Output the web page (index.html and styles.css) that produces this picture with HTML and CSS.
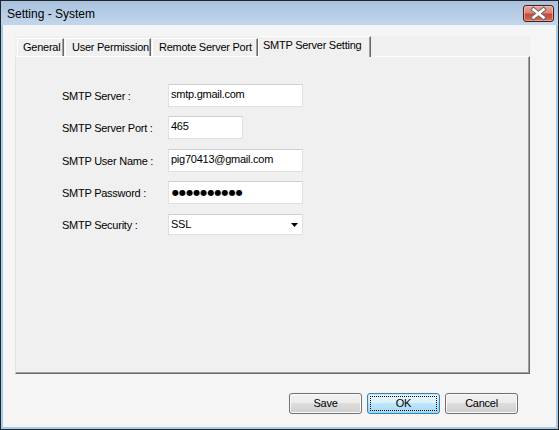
FILE: index.html
```html
<!DOCTYPE html>
<html>
<head>
<meta charset="utf-8">
<title>Setting - System</title>
<link rel="stylesheet" href="styles.css">
</head>
<body>
<div class="window">
  <div class="titlebar">
    <span class="title">Setting - System</span>
    <div class="close">
      <svg width="29" height="15" viewBox="0 0 29 15">
        <path d="M9.5 3.5 L19.5 11.5 M19.5 3.5 L9.5 11.5" stroke="#6b6b6b" stroke-width="4.6" stroke-linecap="square" fill="none"/>
        <path d="M9.5 3.5 L19.5 11.5 M19.5 3.5 L9.5 11.5" stroke="#ffffff" stroke-width="2.6" stroke-linecap="square" fill="none"/>
      </svg>
    </div>
  </div>
  <div class="client">
    <div class="tabcontrol">
      <div class="tabs">
        <div class="tab t-general">General</div>
        <div class="tab t-user">User Permission</div>
        <div class="tab t-remote">Remote Server Port</div>
        <div class="tab t-smtp selected">SMTP Server Setting</div>
      </div>
      <div class="panel">
        <div class="form">
          <div class="label">SMTP Server :</div>
          <div class="textbox wide">smtp.gmail.com</div>
          <div class="label">SMTP Server Port :</div>
          <div class="textbox port">465</div>
          <div class="label">SMTP User Name :</div>
          <div class="textbox wide">pig70413@gmail.com</div>
          <div class="label">SMTP Password :</div>
          <div class="textbox wide"><span class="dots">●●●●●●●●●●</span></div>
          <div class="label short">SMTP Security :</div>
          <div class="combo">
            <span class="combo-text">SSL</span>
            <svg class="arrow" width="7" height="4" viewBox="0 0 7 4"><path d="M0 0 H7 L3.5 4 Z" fill="#000"/></svg>
          </div>
        </div>
      </div>
    </div>
    <div class="buttons">
      <div class="btn">Save</div>
      <div class="btn default"><span class="focus">OK</span></div>
      <div class="btn">Cancel</div>
    </div>
  </div>
</div>
</body>
</html>
```

FILE: styles.css
```css
html, body {
  margin: 0;
  padding: 0;
  background: #ffffff;
}

body {
  font-family: "Liberation Sans", Arial, sans-serif;
  font-size: 11px;
  letter-spacing: -0.25px;
  color: #000;
}

.window {
  width: 559px;
  height: 430px;
  box-sizing: border-box;
  border: 1px solid #252525;
  background: #f5f5f5;
  display: flex;
  flex-direction: column;
}

.titlebar {
  height: 24px;
  flex: none;
  display: flex;
  align-items: flex-start;
  background: linear-gradient(#a7c1de, #c3d7ec);
  padding-left: 6px;
}

.title {
  font-size: 12px;
  line-height: 14px;
  margin-top: 6px;
  letter-spacing: 0;
}

.close {
  margin-left: auto;
  margin-right: 4px;
  margin-top: 4px;
  width: 31px;
  height: 17px;
  box-sizing: border-box;
  border: 1px solid #4e1a18;
  border-radius: 3px;
  background: linear-gradient(#e6a598 0%, #d98575 45%, #c54b37 55%, #cf6a52 100%);
  box-shadow: inset 0 0 0 1px rgba(255, 220, 210, 0.5);
  display: flex;
}

.client {
  flex: 1;
  display: flex;
  flex-direction: column;
  border: 2px solid #a2cbec;
  border-top: 0;
}

.tabcontrol {
  margin: 11px 0 0 12px;
  width: 515px;
  height: 338px;
  background: #f0f0f0;
  display: flex;
  flex-direction: column;
}

.tabs {
  height: 20px;
  flex: none;
  display: flex;
  align-items: flex-end;
  padding-left: 2px;
}

.tab {
  height: 18px;
  box-sizing: border-box;
  border-top: 1px solid #ffffff;
  border-left: 1px solid #ffffff;
  border-right: 1px solid #696969;
  box-shadow: inset -1px 0 #a0a0a0;
  line-height: 17px;
  white-space: nowrap;
  overflow: hidden;
  background: #f0f0f0;
}

.t-general { width: 47px; margin-right: 1px; padding-left: 5px; }
.t-user { width: 86px; margin-right: 1px; padding-left: 6px; }
.t-remote { width: 106px; padding-left: 6px; }
.t-smtp { width: 113px; padding-left: 4px; }

.tab.selected {
  height: 21px;
  margin-bottom: -1px;
  position: relative;
  z-index: 1;
  line-height: 16px;
}

.panel {
  flex: 1;
  box-sizing: border-box;
  border-top: 1px solid #ffffff;
  border-left: 1px solid #e3e3e3;
  border-right: 1px solid #696969;
  border-bottom: 1px solid #696969;
  box-shadow: inset -1px -1px #a0a0a0;
}

.form {
  display: grid;
  grid-template-columns: 106px auto;
  grid-template-rows: 32px 33px 32px 33px 21px;
  justify-items: start;
  align-items: start;
  padding: 27px 0 0 46px;
}

.label {
  line-height: 24px;
  white-space: nowrap;
}

.label.short {
  line-height: 22px;
}

.textbox {
  height: 23px;
  box-sizing: border-box;
  background: #ffffff;
  border: 1px solid #e0e0e0;
  border-top-color: #cfcfcf;
  padding: 0 2px;
  line-height: 19px;
  white-space: nowrap;
}

.wide { width: 135px; }
.port { width: 75px; }

.dots {
  font-family: "DejaVu Sans", sans-serif;
  font-size: 8px;
  letter-spacing: 0.1px;
  padding-left: 1px;
}

.combo {
  width: 135px;
  height: 21px;
  box-sizing: border-box;
  background: #ffffff;
  border: 1px solid #e0e0e0;
  border-top-color: #cfcfcf;
  display: flex;
  align-items: center;
  padding: 0 4px 0 2px;
}

.combo-text {
  flex: 1;
  line-height: 17px;
}

.arrow {
  display: block;
}

.buttons {
  display: flex;
  gap: 5px;
  margin-top: 19px;
  padding-left: 286px;
}

.btn {
  width: 73px;
  height: 21px;
  box-sizing: border-box;
  border: 1px solid #707070;
  border-radius: 3px;
  background: linear-gradient(#f2f2f2 0%, #ebebeb 50%, #dddddd 50%, #cfcfcf 100%);
  box-shadow: inset 0 0 0 1px #fbfbfb;
  display: flex;
  align-items: center;
  justify-content: center;
  line-height: 17px;
}

.btn.default {
  border-color: #3c7fb1;
  background: linear-gradient(#eaf6fd 0%, #d9f0fc 50%, #bee6fd 50%, #a7d9f5 100%);
  box-shadow: inset 0 0 0 1px #48d8fb40;
  padding: 2px;
  align-items: stretch;
}

.focus {
  flex: 1;
  border: 1px dotted #000;
  display: flex;
  align-items: center;
  justify-content: center;
}
```
